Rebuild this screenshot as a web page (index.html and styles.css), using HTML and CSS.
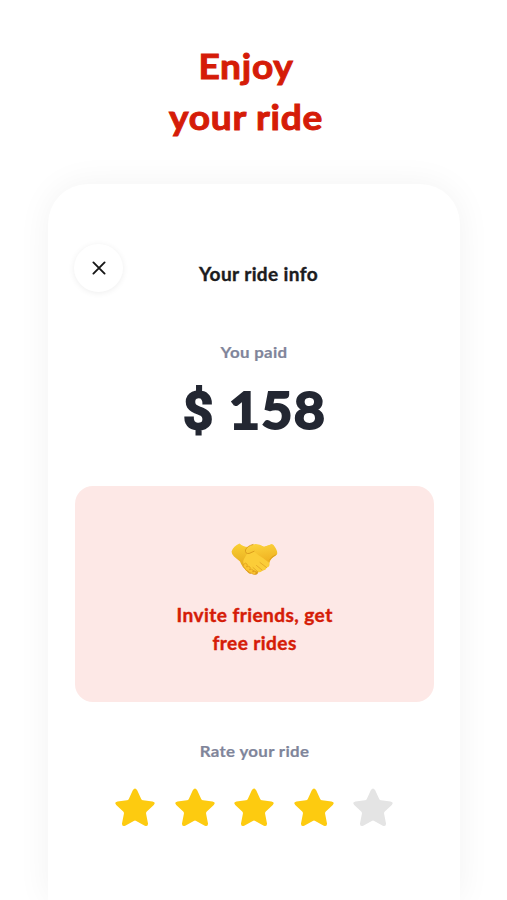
FILE: index.html
```
<!DOCTYPE html>
<html lang="en">
<head>
<meta charset="utf-8">
<title>Your ride info</title>
<link rel="stylesheet" href="styles.css">
</head>
<body>
<svg class="defs" width="0" height="0" aria-hidden="true">
  <symbol id="star" viewBox="0 0 40 40">
    <path d="M17.8 2.2Q20 -1 22.2 2.2L26.2 11Q26.8 12.2 28.1 12.3L37.5 13.4Q41.2 14.2 38.8 17L31.8 23.5Q30.9 24.4 31.1 25.7L33 35.5Q33.2 39 29.8 37.7L21.2 32.9Q20 32.3 18.8 32.9L10.2 37.7Q6.8 39 7 35.5L8.9 25.7Q9.1 24.4 8.2 23.5L1.2 17Q-1.2 14.2 2.5 13.4L11.9 12.3Q13.2 12.2 13.8 11Z"/>
  </symbol>
</svg>
<h1 class="headline">Enjoy<br>your ride</h1>
<main class="card">
  <header class="bar">
    <button class="close" aria-label="Close">
      <svg width="14" height="14" viewBox="0 0 14 14"><path d="M1.4 1.4L12.6 12.6M12.6 1.4L1.4 12.6"/></svg>
    </button>
    <h2 class="title">Your ride info</h2>
  </header>
  <p class="label paid">You paid</p>
  <p class="amount"><span class="currency">$</span> 158</p>
  <section class="invite">
    <svg class="hands" width="47" height="34" viewBox="0 0 47 34">
      <defs>
        <linearGradient id="skin" x1="0" y1="0" x2="0" y2="1"><stop offset="0" stop-color="#fbd033"/><stop offset="1" stop-color="#dd9c18"/></linearGradient>
        <linearGradient id="hand" x1="0" y1="0" x2=".3" y2="1"><stop offset="0" stop-color="#fdd640"/><stop offset="1" stop-color="#f0b322"/></linearGradient>
      </defs>
      <path fill="url(#skin)" d="M8.5 1.6Q2.5 4 .6 9.5Q.4 12 3 14.5L9 19.5Q10 22.5 12 25L17 30.5Q19 32.5 21 31.3L24.5 32.8Q27 32.8 27 30L33 28Q38 24 38.5 18L46 12.5Q47.2 9 42.5 3Q41 1.5 39 2.8L33 4.8Q28 2 23 3.5L17 5Q12 5 8.5 1.6Z"/>
      <path fill="url(#hand)" d="M33 5Q27 1 22 2.5Q16 4 14.5 8Q14 12 18 11.5L23 9.3Q26 12.5 32 16L38.5 21Q39.5 16 45 12.5Q46 9 42 3.5Q41 1.5 39 3Z"/>
      <path fill="#fbcd38" d="M23 9.3Q19 12.3 16 11.8L13 17Q11 21 14 24Q18 29 22 28L27 30Q31 31 31 28Q35 29 35.5 25.5Q39 25 38.5 21L32 16Q26 12.5 23 9.3Z"/>
      <path fill="none" stroke="#d99a1c" stroke-width=".9" stroke-linecap="round" stroke-linejoin="round" d="M23 9.3L18 11.5Q14 12 14.5 8Q16 4 22 2.5M38.5 18Q40 15 44.5 13"/>
      <path fill="#fbc430" stroke="#d8961a" stroke-width=".6" d="M12.5 22.5Q14.5 20 16 22Q17 23 15.5 25Q17.5 23.5 19 25Q20 26 18.5 27.8Q20.5 26.5 22 28Q22.8 29 21.5 30Q24 28.7 25 30Q25.5 32 23.5 32.4Q21 32.5 20.5 31Q18 31.5 17 29Q14.5 29 14 26.2Q11 25 12.5 22.5Z"/>
      <path fill="none" stroke="#e0a124" stroke-width=".8" stroke-linecap="round" d="M31 28L25.5 23.5M35.5 25.5L29 20.5M27 30L22 25.5"/>
    </svg>
    <p class="invite-text">Invite friends, get<br>free rides</p>
  </section>
  <p class="label rate">Rate your ride</p>
  <div class="stars">
    <svg class="star"><use href="#star"/></svg>
    <svg class="star"><use href="#star"/></svg>
    <svg class="star"><use href="#star"/></svg>
    <svg class="star"><use href="#star"/></svg>
    <svg class="star off"><use href="#star"/></svg>
  </div>
</main>
</body>
</html>
```

FILE: styles.css
```
* { box-sizing: border-box; }
body {
  display: flex;
  flex-direction: column;
  height: 900px;
  margin: 0;
  overflow: hidden;
  background: #fff;
  font-family: Lato, sans-serif;
  font-weight: 700;
}
h1, h2, p { margin: 0; }
.defs { position: absolute; }
.headline {
  width: 492px;
  height: 101px;
  margin-top: 40px;
  color: #d51c08;
  font-size: 35px;
  line-height: 50.5px;
  letter-spacing: .7px;
  text-align: center;
  transform: scaleX(1.06);
  -webkit-text-stroke: 1px #d51c08;
}
.card {
  display: flex;
  flex-direction: column;
  flex: none;
  width: 412px;
  height: 716px;
  margin: 43px 0 0 48px;
  padding: 60px 26px 0;
  border-radius: 40px 40px 0 0;
  background: #fff;
  box-shadow: 0 0 34px rgba(0, 0, 0, .055);
}
.bar { display: flex; height: 48px; }
.close {
  display: flex;
  align-items: center;
  justify-content: center;
  width: 49px;
  height: 48px;
  padding: 0;
  border: 0;
  border-radius: 50%;
  background: #fff;
  box-shadow: 0 1px 6px rgba(0, 0, 0, .07);
}
.close path { fill: none; stroke: #161616; stroke-width: 1.9; stroke-linecap: round; }
.title {
  margin: 18px 0 0 76px;
  color: #1c1c1e;
  font-size: 18px;
  line-height: 24px;
  letter-spacing: .35px;
  white-space: nowrap;
  transform: scaleX(1.06);
  transform-origin: left;
  -webkit-text-stroke: .35px #1c1c1e;
}
.label {
  color: #80859a;
  font-size: 16px;
  line-height: 20px;
  letter-spacing: .3px;
  text-align: center;
  transform: scaleX(1.055);
  -webkit-text-stroke: .2px #80859a;
}
.paid { margin-top: 50px; }
.amount {
  height: 60px;
  margin-top: 17px;
  padding-left: 1px;
  color: #232732;
  font-size: 52px;
  line-height: 60px;
  letter-spacing: 1.2px;
  text-align: center;
  transform: scaleX(1.035);
  -webkit-text-stroke: 2px #232732;
}
.currency { font-family: Roboto, sans-serif; font-size: 51px; line-height: 1; }
.invite {
  display: flex;
  flex-direction: column;
  align-items: center;
  width: 359px;
  height: 216px;
  margin: 47px 0 0 1px;
  padding-top: 56px;
  border-radius: 18px;
  background: #fde8e6;
}
.invite-text {
  margin-top: 25px;
  padding-left: 1px;
  color: #d51c08;
  font-size: 18px;
  line-height: 28px;
  letter-spacing: .4px;
  text-align: center;
  transform: scaleX(1.06);
  -webkit-text-stroke: .4px #d51c08;
}
.rate { margin-top: 39px; padding-left: 1px; }
.stars {
  display: flex;
  justify-content: space-between;
  width: 278px;
  margin: 27px 0 0 41px;
}
.star { width: 40px; height: 40px; fill: #fdcb10; }
.off { fill: #e4e4e4; }
```
